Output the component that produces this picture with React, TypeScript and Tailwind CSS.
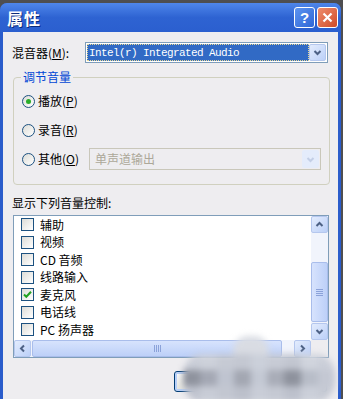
import React from "react";

const cjk = "font-['Noto_Sans_CJK_SC','Liberation_Sans',sans-serif]";

type Dir = "up" | "down" | "left" | "right";

const Arrow: React.FC<{ dir: Dir; color?: string }> = ({ dir, color = "#4D6185" }) => {
  const paths: Record<Dir, string> = {
    up: "M2.5 7 L5.5 4 L8.5 7",
    down: "M2.5 4 L5.5 7 L8.5 4",
    left: "M7 2.5 L4 5.5 L7 8.5",
    right: "M4 2.5 L7 5.5 L4 8.5",
  };
  return (
    <svg width="11" height="11" viewBox="0 0 11 11">
      <path d={paths[dir]} fill="none" stroke={color} strokeWidth="2" />
    </svg>
  );
};

const ScrollBtn: React.FC<{ dir: Dir }> = ({ dir }) => (
  <div className="w-[17px] h-[17px] rounded-[2px] border border-[#B5C7EE] bg-gradient-to-br from-[#E3ECFD] to-[#BCD0F8] flex items-center justify-center">
    <Arrow dir={dir} />
  </div>
);

const CheckBox: React.FC<{ checked?: boolean }> = ({ checked }) => (
  <div className="w-[13px] h-[13px] border border-[#1C5180] bg-gradient-to-br from-[#DCDCD7] to-white flex items-center justify-center shrink-0">
    {checked && (
      <svg width="11" height="11" viewBox="0 0 11 11">
        <path d="M2 5.5 L4.3 7.8 L9 2.8" fill="none" stroke="#21A121" strokeWidth="2" />
      </svg>
    )}
  </div>
);

const Radio: React.FC<{ checked?: boolean }> = ({ checked }) => (
  <div className="w-[13px] h-[13px] rounded-full border border-[#1C5180] bg-gradient-to-br from-[#DCDCD7] to-white flex items-center justify-center shrink-0">
    {checked && <div className="w-[5px] h-[5px] rounded-full bg-[#2AAE2A]" />}
  </div>
);

const items = [
  { label: "辅助" },
  { label: "视频" },
  { label: "CD 音频" },
  { label: "线路输入" },
  { label: "麦克风", checked: true },
  { label: "电话线" },
  { label: "PC 扬声器" },
];

const mosaic = [
  ["#C9CDD7", "#CDD1DA", "#C6CAD4", "#C4C8D2", "#CBD0DA", "#C7CBD5", "#C2C6D0", "#D0D4DD", "#CACED8"],
  ["#8F939E", "#A4A8B4", "#BFC4D0", "#A3A7B2", "#C4C9D4", "#A9ADB8", "#8E929D", "#B8BDC8", "#C4C8D3"],
  ["#BFC3CE", "#C8CCD6", "#C3C7D1", "#BCC0CB", "#C9CDD7", "#C5C9D3", "#BDC1CC", "#CBCFD9", "#C6CAD4"],
];

export default function App() {
  return (
    <div className={`relative w-[343px] h-[399px] overflow-hidden bg-[#4E4E50] pt-[3px] pr-[2px] ${cjk}`}>
      <div className="h-full flex flex-col rounded-t-[7px] bg-[#2A5CCB]">
        {/* title bar */}
        <div className="h-[29px] shrink-0 flex items-center pl-[7px] pr-[3px] rounded-t-[7px] bg-gradient-to-b from-[#4F86EA] via-[#2E63D2] to-[#2B5FCF]">
          <span className="text-white text-[16px] font-bold leading-none tracking-[1px] [text-shadow:1px_1px_0_#0A2A7A]">
            属性
          </span>
          <div className="ml-auto flex items-center gap-[2px]">
            <div className="w-[21px] h-[21px] rounded-[3px] border border-white bg-gradient-to-br from-[#5E94F0] to-[#2F66D6] flex items-center justify-center text-white font-bold text-[15px] leading-none font-['Liberation_Sans',sans-serif]">
              ?
            </div>
            <div className="w-[21px] h-[21px] rounded-[3px] border border-white bg-gradient-to-br from-[#EE8C6C] to-[#D04A26] flex items-center justify-center">
              <svg width="13" height="13" viewBox="0 0 13 13">
                <path d="M2.5 2.5 L10.5 10.5 M10.5 2.5 L2.5 10.5" stroke="white" strokeWidth="2.2" />
              </svg>
            </div>
          </div>
        </div>

        {/* body */}
        <div className="flex-1 mx-[3px] bg-[#EEEDF0] flex flex-col text-[12px] text-black leading-[14px]">
          {/* mixer row */}
          <div className="mt-[10px] h-[21px] flex items-center">
            <span className="pl-[9px] w-[82px]">
              混音器(<u>M</u>):
            </span>
            <div className="w-[243px] h-[21px] border border-[#7F9DB9] bg-white flex items-center p-[1px]">
              <div className="flex-1 h-full bg-[#316AC5] border border-dotted border-[#E8D890] flex items-center pl-[1px]">
                <span className="text-white text-[11px] tracking-[-0.6px] font-['Liberation_Mono',monospace]">
                  Intel(r) Integrated Audio
                </span>
              </div>
              <ScrollBtn dir="down" />
            </div>
          </div>

          {/* group box */}
          <div className="relative mt-[14px] ml-[10px] w-[317px] h-[108px] border border-[#D0D0BF] rounded-[4px]">
            <span className="absolute -top-[8px] left-[7px] px-[2px] bg-[#EEEDF0] text-[#0046D5]">调节音量</span>
            <div className="flex flex-col pl-[8px]">
              <div className="mt-[13px] h-[20px] flex items-center gap-[3px]">
                <Radio checked />
                <span>
                  播放(<u>P</u>)
                </span>
              </div>
              <div className="mt-[9px] h-[20px] flex items-center gap-[3px]">
                <Radio />
                <span>
                  录音(<u>R</u>)
                </span>
              </div>
              <div className="mt-[8px] h-[22px] flex items-center gap-[3px]">
                <Radio />
                <span className="w-[48px]">
                  其他(<u>O</u>)
                </span>
                <div className="w-[232px] h-[22px] border border-[#C9C7BA] flex items-center p-[1px]">
                  <span className="flex-1 pl-[4px] text-[#ACA899]">单声道输出</span>
                  <div className="w-[17px] h-[18px] rounded-[2px] bg-[#E4ECFB] flex items-center justify-center">
                    <Arrow dir="down" color="#C3CFE6" />
                  </div>
                </div>
              </div>
            </div>
          </div>

          <div className="mt-[11px] pl-[9px]">显示下列音量控制:</div>

          {/* list */}
          <div className="mt-[5px] ml-[10px] w-[316px] h-[143px] border border-[#7F9DB9] bg-white grid grid-cols-[1fr_17px] grid-rows-[1fr_17px]">
            <div className="flex flex-col pl-[7px] overflow-hidden">
              {items.map((it) => (
                <div key={it.label} className="h-[17.5px] shrink-0 flex items-center gap-[6px]">
                  <CheckBox checked={it.checked} />
                  <span>{it.label}</span>
                </div>
              ))}
            </div>
            {/* vertical scrollbar */}
            <div className="flex flex-col bg-[#F1F4FC]">
              <ScrollBtn dir="up" />
              <div className="h-[29px]" />
              <div className="h-[60px] rounded-[2px] border border-[#A9BDEB] bg-gradient-to-r from-[#D7E3FD] to-[#BDD0F8] flex flex-col items-center justify-center gap-[1px]">
                {[0, 1, 2, 3].map((i) => (
                  <div key={i} className="w-[7px] h-[1px] bg-[#8BA2D9]" />
                ))}
              </div>
              <div className="flex-1" />
              <ScrollBtn dir="down" />
            </div>
            {/* horizontal scrollbar */}
            <div className="flex bg-[#F1F4FC]">
              <ScrollBtn dir="left" />
              <div className="w-[1px]" />
              <div className="w-[250px] h-[17px] rounded-[2px] border border-[#A9BDEB] bg-gradient-to-b from-[#D7E3FD] to-[#BDD0F8] flex items-center justify-center gap-[1px]">
                {[0, 1, 2, 3].map((i) => (
                  <div key={i} className="w-[1px] h-[7px] bg-[#8BA2D9]" />
                ))}
              </div>
              <div className="flex-1" />
              <ScrollBtn dir="right" />
            </div>
            <div className="bg-[#EEEDF0]" />
          </div>

          {/* buttons */}
          <div className="mt-[13px] flex justify-end gap-[7px] pr-[11px]">
            <div className="w-[73px] h-[21px] rounded-[3px] border border-[#003C74] bg-gradient-to-b from-white to-[#E3E3DB] shadow-[inset_0_0_0_2px_#B8D0F8] flex items-center justify-center">
              确定
            </div>
            <div className="w-[73px] h-[21px] rounded-[3px] border border-[#003C74] bg-gradient-to-b from-white to-[#E3E3DB] flex items-center justify-center">
              取消
            </div>
          </div>
        </div>
      </div>

      {/* pixelated blur blob covering the buttons */}
      <div className="absolute left-[183px] top-[336px] w-[152px] h-[66px] blur-[3px]">
        <div className="absolute left-[50px] top-0 w-[36px] h-[30px] rounded-full bg-[#D9DCE3]" />
        <div className="absolute left-0 top-[18px] w-[152px] h-[48px] rounded-[20px] overflow-hidden flex flex-col">
          {mosaic.map((row, r) => (
            <div key={r} className="flex flex-1">
              {row.map((c, i) => (
                <div key={i} className="flex-1" style={{ backgroundColor: c }} />
              ))}
            </div>
          ))}
        </div>
      </div>
    </div>
  );
}
